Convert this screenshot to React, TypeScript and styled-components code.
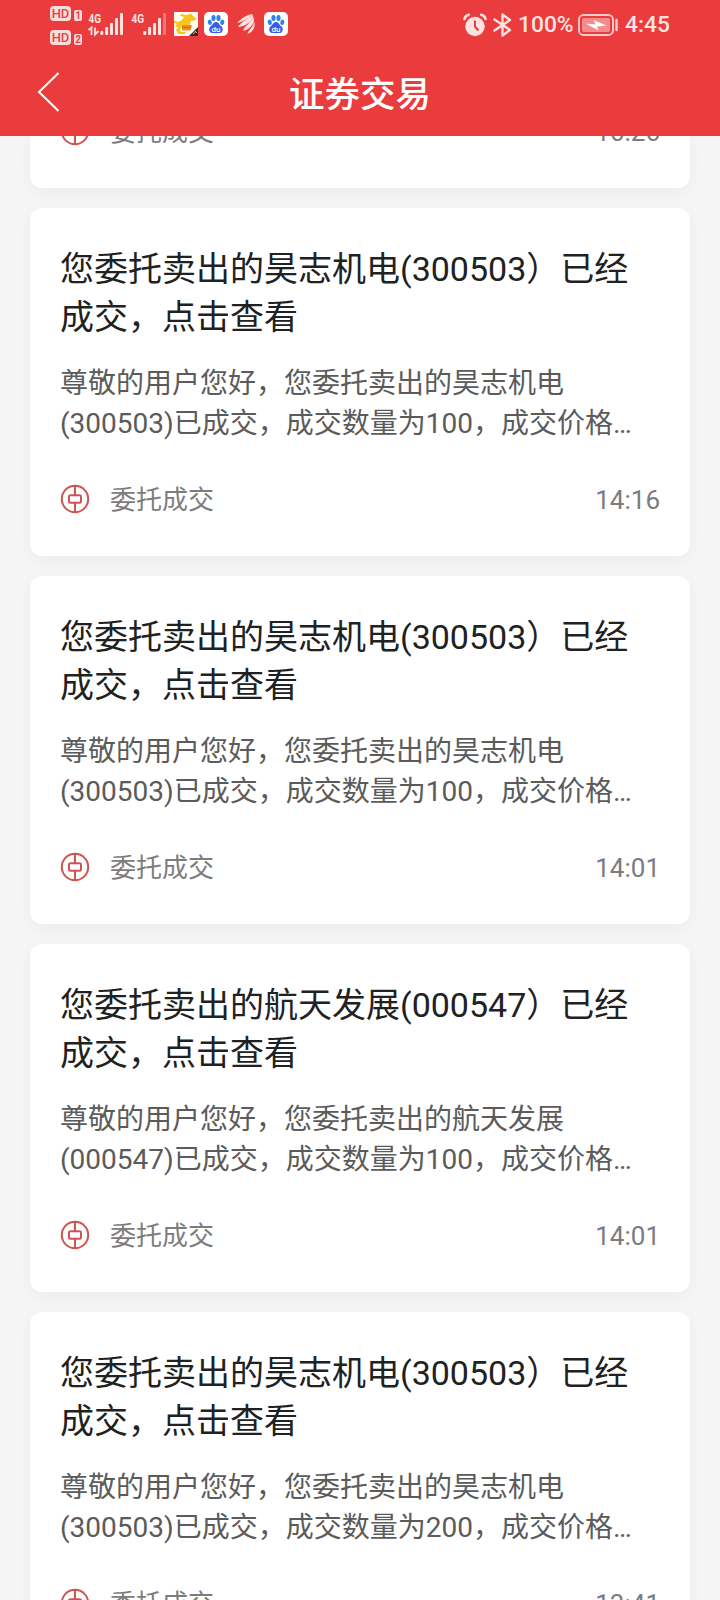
import React from "react";
import styled, { createGlobalStyle, css } from "styled-components";

const GlobalStyle = createGlobalStyle`
  * { box-sizing: border-box; }
  body {
    margin: 0;
    background: #f5f5f5;
    font-family: Roboto, "Noto Sans CJK SC", sans-serif;
  }
`;

const Screen = styled.div`
  display: flex;
  flex-direction: column;
  width: 720px;
  height: 1600px;
  overflow: hidden;
  background: #f5f5f5;
`;

const Header = styled.header`
  flex: none;
  height: 136px;
  background: #ea3c3c;
  color: #fff;
`;

const StatusBar = styled.div`
  display: flex;
  justify-content: space-between;
  align-items: center;
  height: 50px;
  padding: 0 50px;
  color: #ffe3e3;
`;

const StatusGroup = styled.div<{ $gap?: number }>`
  display: flex;
  align-items: center;
  gap: ${(p) => p.$gap ?? 0}px;
`;

const AppIcons = styled(StatusGroup)`
  padding-bottom: 2px;

  & + & {
    margin-left: 3px;
  }
`;

const HdStack = styled.div`
  display: flex;
  flex-direction: column;
  gap: 9px;
  width: 32px;
`;

const HdRow = styled.div`
  display: flex;
  align-items: flex-end;
  gap: 3px;
  height: 15px;
`;

const HdBadge = styled.span`
  width: 21px;
  height: 15px;
  border-radius: 4px;
  background: #ffdcdc;
  color: #e04444;
  font-size: 13px;
  font-weight: 500;
  line-height: 15.5px;
  text-align: center;
`;

const SimNumber = styled.span`
  width: 8px;
  height: 11px;
  border-radius: 2px;
  background: #ffdcdc;
  color: #ea3c3c;
  font-size: 10px;
  font-weight: 700;
  line-height: 11px;
  text-align: center;
`;

const StatusText = styled.span<{ $width: number }>`
  width: ${(p) => p.$width}px;
  font-size: 22.8px;
  font-weight: 500;
  line-height: 28px;
  white-space: nowrap;
`;

const TitleBar = styled.div`
  display: grid;
  grid-template-columns: 100px 1fr 100px;
  align-items: center;
  height: 86px;
`;

const BackButton = styled.button`
  display: flex;
  align-items: center;
  height: 86px;
  padding: 0 0 2px 36px;
  border: 0;
  background: none;
`;

const PageTitle = styled.h1`
  margin: 0;
  padding-top: 4px;
  font-size: 35.5px;
  font-weight: 500;
  line-height: 50px;
  text-align: center;
`;

const Feed = styled.main`
  display: flex;
  flex: 1;
  flex-direction: column;
  justify-content: flex-start;
  gap: 20px;
  min-height: 0;
  padding: 0 30px;
  overflow: hidden;
`;

const CardFooter = styled.footer`
  display: flex;
  align-items: center;
  height: 40px;
  margin-top: 35px;
  color: #7c7c7c;
  font-size: 26px;
  line-height: 40px;
`;

const Card = styled.article<{ $scrolled?: boolean }>`
  flex: none;
  height: 348px;
  padding: 37px 30px 0;
  border-radius: 12px;
  background: #fff;
  box-shadow: 0 4px 16px rgba(0, 0, 0, 0.04);

  ${(p) =>
    p.$scrolled &&
    css`
      height: 52px;
      padding-top: 0;
      border-radius: 0 0 12px 12px;

      ${CardFooter} {
        margin-top: -25px;
      }
    `}
`;

const CardTitle = styled.h2`
  margin: 0;
  color: #212121;
  font-size: 34px;
  font-weight: 400;
  line-height: 48px;
`;

const CardBody = styled.p`
  margin: 23px 0 0;
  color: #5b5b5b;
  font-size: 28px;
  line-height: 40px;
`;

const Category = styled.span`
  flex: 1;
  margin-left: 20px;
  padding-top: 2px;
`;

const Time = styled.time`
  padding-top: 2px;
`;

const HdIndicator = ({ sim }: { sim: number }) => (
  <HdRow>
    <HdBadge>HD</HdBadge>
    <SimNumber>{sim}</SimNumber>
  </HdRow>
);

const Signal = ({ data, faded }: { data?: boolean; faded?: boolean }) => (
  <svg width="37" height="26" viewBox="0 0 37 26" fill="#ffe3e3">
    <text x="0.500" y="10.500" fontSize="13.500" fontWeight="700" fontFamily="Roboto" textLength="12.500" lengthAdjust="spacingAndGlyphs">4G</text>
    {data && (
      <path d="M0.500 18L3.500 15.500V23M7 15.500V22.500L10.500 19" fill="none" stroke="#ffe3e3" strokeWidth="1.800" />
    )}
    <rect x="12.300" y="19" width="3" height="4" rx="1" />
    <rect x="17.100" y="15" width="3" height="8" rx="1" />
    <rect x="22" y="11" width="3" height="12" rx="1" />
    <rect x="27" y="6" width="3" height="17" rx="1" />
    <rect x="32" y="1" width="3" height="22" rx="1" opacity={faded ? 0.35 : 1} />
  </svg>
);

const DogIcon = () => (
  <svg width="24" height="24" viewBox="0 0 24 24">
    <rect width="24" height="24" fill="#fffdf5" />
    <path d="M0 8.500L4 10L8 8L10 5L6 3.500L7 2L13 3L17 1.500L20 5L22.500 6.500L21 8.500L17 9L15.500 14H8L6 18L7 20L12 20L11 22H4L2 18L4 15L1 15L3 12L0 11Z" fill="#f8c51c" />
    <path d="M8 13H18L16.500 18.500H8Z" fill="#f28b25" />
    <path d="M8 15.500H17" stroke="#c96835" strokeWidth="1" />
    <path d="M24 15V24H15Z" fill="#432524" />
    <path d="M19 22L20.500 20.500M21 19L22.500 21" stroke="#e9d5cb" strokeWidth="1" />
  </svg>
);

const PawIcon = () => (
  <svg width="24" height="24" viewBox="0 0 24 24">
    <rect width="24" height="24" rx="5" fill="#fff" />
    <g fill="#2e82e8">
      <ellipse cx="5.800" cy="10.300" rx="2" ry="2.700" transform="rotate(-15 5.8 10.3)" />
      <ellipse cx="9.500" cy="6" rx="2.100" ry="2.900" />
      <ellipse cx="14.500" cy="6" rx="2.100" ry="2.900" />
      <ellipse cx="18.300" cy="10.300" rx="2" ry="2.700" transform="rotate(15 18.3 10.3)" />
    </g>
    <path d="M12 10C14.500 10 15 12.500 17 14C19.500 16 19.500 20.500 15.800 21C14 21.200 10 21.200 8.200 21C4.500 20.500 4.500 16 7 14C9 12.500 9.500 10 12 10Z" fill="#3a5ae8" />
    <text x="12" y="19.500" fill="#fff" fontFamily="Roboto" fontSize="8" fontWeight="500" textAnchor="middle">du</text>
  </svg>
);

const FeatherIcon = () => (
  <svg width="18" height="20" viewBox="0 0 18 20" fill="#ffdede">
    <path d="M0 9C3 6 8 1 15.500 0C15.500 2 13 3.300 10 4.800C6 6.800 4 8.500 0 9Z" />
    <path d="M1 13C4 8.500 10 5 16 1C17 4.500 14.500 7 12 8.700C8.500 11 5.500 12.700 1 13Z" />
    <path d="M6 16.500C8 12 13 9 16.800 3.500C18 8 15.500 11 13.200 13.200C11 15.200 9 16.500 6 16.500Z" />
    <path d="M10.500 20C11.500 16 15.500 13.500 17.500 8C18.400 14 15.500 18.500 10.500 20Z" />
  </svg>
);

const AlarmIcon = () => (
  <svg width="24" height="24" viewBox="0 0 24 24">
    <circle cx="12" cy="13.500" r="9.700" fill="#ffe3e3" />
    <path d="M1.500 6C2 3.800 3.500 2.200 5.800 1.700M22.500 6C22 3.800 20.500 2.200 18.200 1.700" fill="none" stroke="#ffe3e3" strokeWidth="2.600" strokeLinecap="round" />
    <path d="M12 7.500V13.500L15.500 17.500" fill="none" stroke="#ea3c3c" strokeWidth="2" />
  </svg>
);

const BluetoothIcon = () => (
  <svg width="19" height="24" viewBox="0 0 19 24" fill="none" stroke="#ffe3e3" strokeWidth="2.300" strokeLinejoin="round" strokeLinecap="round">
    <path d="M1.500 6.500L17 17L9.500 22.500V1.500L17 7L1.500 17.500" />
  </svg>
);

const BatteryIcon = () => (
  <svg width="41" height="22" viewBox="0 0 41 22">
    <rect x="1" y="1" width="34" height="20" rx="4.500" fill="none" stroke="#ffcaca" strokeWidth="1.900" />
    <rect x="4" y="4" width="28" height="14" rx="2" fill="#f68b8b" />
    <path d="M7.500 9.500L17.500 10.500L15.500 6L28.500 11.500L19 12.500L20.500 16.500Z" fill="#fff" />
    <path d="M38.500 6V16" stroke="#ffd6d6" strokeWidth="2.400" strokeLinecap="round" />
  </svg>
);

const BackIcon = () => (
  <svg width="24" height="42" viewBox="0 0 24 42" fill="none" stroke="#fff" strokeWidth="2">
    <path d="M22.500 2L3 21L22.500 40" />
  </svg>
);

const CoinIcon = () => (
  <svg width="30" height="30" viewBox="0 0 30 30" fill="none" stroke="#cf5450" strokeWidth="2">
    <circle cx="15" cy="15" r="13.200" />
    <rect x="9" y="11.300" width="12" height="7.400" rx="1.300" />
    <path d="M15 2V11M15 19V28" />
  </svg>
);

interface Trade {
  stock: string;
  code: string;
  amount: number;
  time: string;
}

const trades: Trade[] = [
  { stock: "昊志机电", code: "300503", amount: 100, time: "14:16" },
  { stock: "昊志机电", code: "300503", amount: 100, time: "14:01" },
  { stock: "航天发展", code: "000547", amount: 100, time: "14:01" },
  { stock: "昊志机电", code: "300503", amount: 200, time: "13:41" },
];

const TradeFooter = ({ time }: { time: string }) => (
  <CardFooter>
    <CoinIcon />
    <Category>委托成交</Category>
    <Time>{time}</Time>
  </CardFooter>
);

const TradeCard = ({ stock, code, amount, time }: Trade) => (
  <Card>
    <CardTitle>{`您委托卖出的${stock}(${code}）已经成交，点击查看`}</CardTitle>
    <CardBody>
      {`尊敬的用户您好，您委托卖出的${stock}`}
      <br />
      {`(${code})已成交，成交数量为${amount}，成交价格…`}
    </CardBody>
    <TradeFooter time={time} />
  </Card>
);

export default function App() {
  return (
    <Screen>
      <GlobalStyle />
      <Header>
        <StatusBar>
          <StatusGroup $gap={6}>
            <HdStack>
              <HdIndicator sim={1} />
              <HdIndicator sim={2} />
            </HdStack>
            <Signal data />
            <Signal faded />
            <AppIcons $gap={6}>
              <DogIcon />
              <PawIcon />
            </AppIcons>
            <AppIcons $gap={9}>
              <FeatherIcon />
              <PawIcon />
            </AppIcons>
          </StatusGroup>
          <StatusGroup $gap={6}>
            <AlarmIcon />
            <BluetoothIcon />
            <StatusText $width={54}>100%</StatusText>
            <BatteryIcon />
            <StatusText $width={45}>4:45</StatusText>
          </StatusGroup>
        </StatusBar>
        <TitleBar>
          <BackButton aria-label="返回">
            <BackIcon />
          </BackButton>
          <PageTitle>证券交易</PageTitle>
        </TitleBar>
      </Header>
      <Feed>
        <Card $scrolled>
          <TradeFooter time="16:26" />
        </Card>
        {trades.map((trade, index) => (
          <TradeCard key={index} {...trade} />
        ))}
      </Feed>
    </Screen>
  );
}
